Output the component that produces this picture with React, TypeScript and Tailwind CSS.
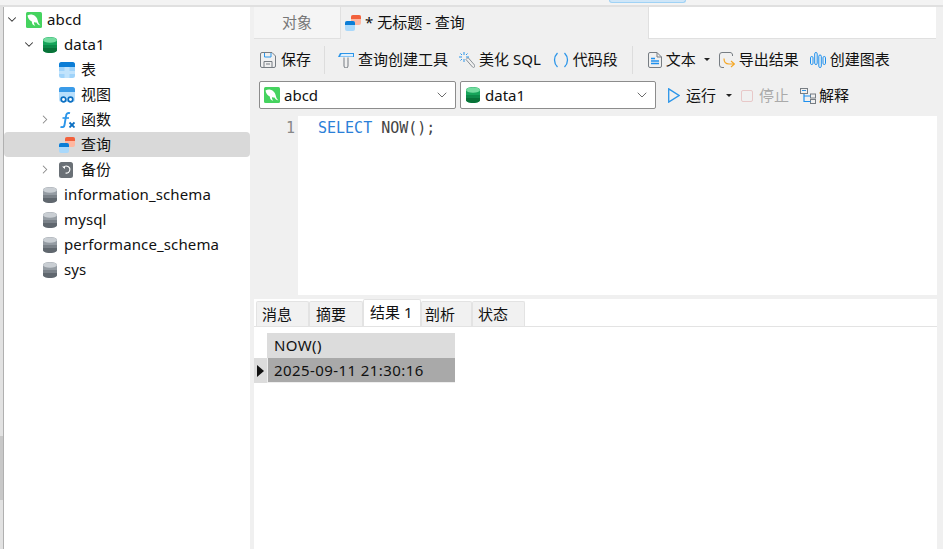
import type { ReactNode } from "react";
import { ChevronDown, ChevronRight } from "lucide-react";

const font = { fontFamily: '"Noto Sans", "Noto Sans CJK SC", sans-serif' };
const mono = { fontFamily: '"DejaVu Sans Mono", monospace' };

function Dolphin() {
  return (
    <svg width="16" height="16" viewBox="0 0 16 16" className="shrink-0">
      <rect width="16" height="16" rx="1.500" fill="#45d35f" />
      <path d="M1.500 3.500c2.500-1.500 5.500-1 7.500.5 2 1.500 2.500 3.500 3 5.500.3 1.300 1 2.500 2.500 4-2-.3-3.300-1.500-4-3-.8.300-1.800 0-2.500-.5-.2 1.500.3 2.500 1.200 3.800C7 13.500 6 12 5.800 9.500 3.500 8.500 2 6.500 1.500 3.500z" fill="#fff" />
    </svg>
  );
}

function Db({ color = "green" }: { color?: "green" | "gray" }) {
  const c = color === "green" ? ["#74dca0", "#16a55a", "#0d8a49", "#087238"] : ["#c9ced3", "#959ca3", "#7b8289", "#60676e"];
  return (
    <svg width="14" height="16" viewBox="0 0 14 16" className="shrink-0">
      <path d="M0 3c0-4 14-4 14 0v10c0 4-14 4-14 0z" fill={c[1]} />
      <path d="M0 8h14v3H0z" fill={c[2]} />
      <path d="M0 11h14v2c0 4-14 4-14 0z" fill={c[3]} />
      <ellipse cx="7" cy="3" rx="7" ry="2.800" fill={c[0]} />
    </svg>
  );
}

function TableIcon() {
  return (
    <svg width="16" height="16" viewBox="0 0 16 16">
      <rect width="16" height="16" rx="2.500" fill="#9fd3fa" />
      <path d="M0 2.500A2.500 2.500 0 0 1 2.500 0h11A2.500 2.500 0 0 1 16 2.500V5H0z" fill="#0b7dd6" />
      <path d="M5.500 5h5v11h-5zM0 9h16v3H0z" fill="#c9e7fd" opacity=".8" />
    </svg>
  );
}

function ViewIcon() {
  return (
    <svg width="16" height="16" viewBox="0 0 16 16">
      <rect width="16" height="15" rx="2.500" fill="#b8dffc" />
      <path d="M0 2.500A2.500 2.500 0 0 1 2.500 0h11A2.500 2.500 0 0 1 16 2.500V5H0z" fill="#3a9be8" />
      <circle cx="4.500" cy="12.500" r="2.300" fill="#fff" stroke="#0b6fc2" strokeWidth="1.700" />
      <circle cx="11.500" cy="12.500" r="2.300" fill="#fff" stroke="#0b6fc2" strokeWidth="1.700" />
    </svg>
  );
}

function FxIcon() {
  return (
    <svg width="16" height="16" viewBox="0 0 16 16" fill="none">
      <path d="M11 1.200C8.500.5 7.300 1.800 7 4L5.500 13c-.3 2-1.500 2.500-4 2" stroke="#2b95e9" strokeWidth="1.900" />
      <path d="M3.500 6h6.500" stroke="#2b95e9" strokeWidth="1.600" />
      <path d="M10.500 10.500l5 5M15.500 10.500l-5 5" stroke="#0b6fc2" strokeWidth="1.800" />
    </svg>
  );
}

function QueryIcon() {
  return (
    <svg width="16" height="16" viewBox="0 0 16 16" className="shrink-0">
      <rect x="6" y="0" width="10" height="10" rx="2" fill="#ffb7a0" />
      <path d="M6 2a2 2 0 0 1 2-2h6a2 2 0 0 1 2 2v2H6z" fill="#f2613c" />
      <rect x="0" y="6" width="10" height="10" rx="2" fill="#a9d8fb" />
      <path d="M0 8a2 2 0 0 1 2-2h6a2 2 0 0 1 2 2v2H0z" fill="#0b7dd6" />
    </svg>
  );
}

function BackupIcon() {
  return (
    <svg width="14" height="16" viewBox="0 0 14 16" fill="none">
      <rect width="14" height="16" rx="2.500" fill="#6a7076" />
      <path d="M4.500 5.500A3.500 3.500 0 1 1 6.500 11" stroke="#fff" strokeWidth="1.100" />
      <path d="M3 4.500h3v2.500z" fill="#fff" />
    </svg>
  );
}

function SaveIcon() {
  return (
    <svg width="16" height="16" viewBox="0 0 16 16" fill="none" className="shrink-0">
      <path d="M2 .5h10L15.500 4v10a1.500 1.500 0 0 1-1.500 1.500H2A1.500 1.500 0 0 1 .5 14V2A1.500 1.500 0 0 1 2 .5z" stroke="#777d83" />
      <path d="M4.500 1v4h6.500V1" stroke="#2b95e9" />
      <path d="M4 15V9.500h8V15M6 12h4" stroke="#777d83" />
    </svg>
  );
}

function HammerIcon() {
  return (
    <svg width="16" height="16" viewBox="0 0 16 16" fill="none" className="shrink-0">
      <path d="M0 5l2-4h14v4H0z" fill="#2b95e9" />
      <path d="M2 4.500L3.500 2H15v2.500H2z" fill="#dff0fd" />
      <path d="M6 5.500v8.500a2 2 0 0 0 4 0V5.500" stroke="#777d83" />
    </svg>
  );
}

function WandIcon() {
  return (
    <svg width="16" height="16" viewBox="0 0 16 16" fill="none" className="shrink-0">
      <path d="M7 7.500L9 5.500l6.500 7.500a1.400 1.400 0 0 1-2 2z" stroke="#8a9096" />
      <path d="M5 0v3M5 7v3M0 5h3M7 5h3M1.500 1.500l1.500 1.500M8.500 1.500L7 3M1.500 8.500L3 7" stroke="#2b95e9" />
    </svg>
  );
}

function ParenIcon() {
  return (
    <svg width="16" height="16" viewBox="0 0 16 16" fill="none" className="shrink-0">
      <path d="M4.500 1C.5 5 .5 11 4.500 15M11.500 1c4 4 4 10 0 14" stroke="#2b95e9" strokeWidth="1.300" />
    </svg>
  );
}

function DocIcon() {
  return (
    <svg width="14" height="16" viewBox="0 0 14 16" fill="none" className="shrink-0">
      <path d="M2 .5h7L13.500 5v9a1.500 1.500 0 0 1-1.500 1.500H2A1.500 1.500 0 0 1 .5 14V2A1.500 1.500 0 0 1 2 .5z" stroke="#777d83" />
      <path d="M9 .5V5h4.500" stroke="#777d83" />
      <path d="M3 6.500h4M3 9h8M3 11.500h8" stroke="#1e90ee" strokeWidth="1.300" />
    </svg>
  );
}

function ExportIcon() {
  return (
    <svg width="16" height="16" viewBox="0 0 16 16" fill="none" className="shrink-0">
      <path d="M11 .5H3A2.500 2.500 0 0 0 .5 3v10A2.500 2.500 0 0 0 3 15.500h2M11 .5c1.500 0 2.500 1 2.500 2.500v1" stroke="#777d83" />
      <path d="M5 6.500c0 4 2 5.500 5 5.500h5M12 9l3.500 3-3.500 3" stroke="#f5a623" strokeWidth="1.200" />
    </svg>
  );
}

function ChartIcon() {
  return (
    <svg width="16" height="16" viewBox="0 0 16 16" fill="none" className="shrink-0">
      <rect x=".5" y="4.500" width="2.500" height="8" rx="1.250" stroke="#1e90ee" />
      <rect x="4.700" y=".5" width="2.500" height="12" rx="1.250" stroke="#1e90ee" />
      <rect x="8.800" y="3" width="2.500" height="12.500" rx="1.250" stroke="#1e90ee" />
      <rect x="13" y="4.500" width="2.500" height="8" rx="1.250" stroke="#1e90ee" />
    </svg>
  );
}

function PlayIcon() {
  return (
    <svg width="12" height="15" viewBox="0 0 12 15" fill="none" className="shrink-0">
      <path d="M.7.9L11 7.500.7 14.100z" stroke="#2b95e9" strokeWidth="1.300" />
    </svg>
  );
}

function StopIcon() {
  return <span className="h-[12px] w-[12px] shrink-0 rounded-[2px] border border-[#e8c8c8]" />;
}

function ExplainIcon() {
  return (
    <svg width="16" height="16" viewBox="0 0 16 16" fill="none" className="shrink-0">
      <rect x=".5" y=".5" width="7" height="5" stroke="#777d83" />
      <path d="M2 2.500h4" stroke="#2b95e9" />
      <rect x="10.500" y="6" width="5" height="4" stroke="#777d83" />
      <rect x="10.500" y="11.500" width="5" height="4" stroke="#777d83" />
      <path d="M4 6v7.500h6.500M4 8h6.500" stroke="#1e90ee" strokeWidth="1.200" />
    </svg>
  );
}

function TreeRow({ indent, arrow, icon, label, selected, latin }: { indent: string; arrow?: "down" | "right"; icon: ReactNode; label: string; selected?: boolean; latin?: boolean }) {
  return (
    <div className={`flex h-[25px] items-center rounded-sm ${indent} ${selected ? "bg-[#d9d9d9]" : ""}`}>
      <div className="flex w-[14px] shrink-0 justify-center">
        {arrow === "down" && <ChevronDown size={17} strokeWidth={1.800} className="text-[#333]" />}
        {arrow === "right" && <ChevronRight size={17} strokeWidth={1.800} className="text-[#888]" />}
      </div>
      <div className="ml-[7px] flex w-[16px] shrink-0">{icon}</div>
      <span className={`text-[15px] text-[#111] ${latin ? "ml-[5px] tracking-[0.12px]" : "ml-[6px]"}`}>{label}</span>
    </div>
  );
}

function ToolBtn({ icon, label, disabled, caret, className }: { icon: ReactNode; label: string; disabled?: boolean; caret?: boolean; className?: string }) {
  return (
    <div className={`flex items-center text-[15px] ${disabled ? "text-[#aaa]" : "text-[#111]"} ${className ?? "gap-[4px]"}`}>
      {icon}
      <span>{label}</span>
      {caret && <span className="ml-[4px] h-0 w-0 border-x-[3px] border-t-[3px] border-x-transparent border-t-[#222]" />}
    </div>
  );
}

function Select({ icon, label, width }: { icon: ReactNode; label: string; width: string }) {
  return (
    <div className={`flex h-[28px] items-center rounded-[2px] border border-[#8c8c8c] bg-white pl-[4px] pr-[5px] ${width}`}>
      {icon}
      <span className="ml-[4px] flex-1 text-[15px] text-[#111]">{label}</span>
      <ChevronDown size={16} strokeWidth={1.300} className="text-[#555]" />
    </div>
  );
}

function Tab({ label, active, width }: { label: string; active?: boolean; width: string }) {
  return (
    <div className={`flex items-center rounded-t-[2px] border border-b-0 border-[#e3e3e3] text-[15px] text-[#111] ${width} ${active ? "h-[27px] bg-white pb-[1px]" : "h-[25px] bg-[#f1f1f1] pt-[1px]"}`}>
      {label}
    </div>
  );
}

export default function App() {
  return (
    <div className="flex h-[549px] w-[943px] flex-col overflow-hidden bg-[#f0f0f0]" style={font}>
      <div className="relative h-[7px] shrink-0 border-b-2 border-[#e0e0e0] bg-[#f3f3f3]">
        <div className="absolute left-[609px] top-0 h-[3px] w-[77px] rounded-b-sm border border-t-0 border-[#9fd2f5] bg-[#cfe6f8]" />
      </div>
      <div className="flex min-h-0 flex-1">
        <div className="flex w-[4px] shrink-0 flex-col border-r border-[#b0b0b0] bg-[#e2e2e2]">
          <div className="mt-[429px] h-[64px] bg-[#c8c8c8]" />
        </div>
        <div className="w-[246px] shrink-0 bg-white">
          <TreeRow indent="pl-[1px]" arrow="down" icon={<Dolphin />} label="abcd" latin />
          <TreeRow indent="pl-[18px]" arrow="down" icon={<Db />} label="data1" latin />
          <TreeRow indent="pl-[34px]" icon={<TableIcon />} label="表" />
          <TreeRow indent="pl-[34px]" icon={<ViewIcon />} label="视图" />
          <TreeRow indent="pl-[34px]" arrow="right" icon={<FxIcon />} label="函数" />
          <TreeRow indent="pl-[34px]" icon={<QueryIcon />} label="查询" selected />
          <TreeRow indent="pl-[34px]" arrow="right" icon={<BackupIcon />} label="备份" />
          <TreeRow indent="pl-[18px]" icon={<Db color="gray" />} label="information_schema" latin />
          <TreeRow indent="pl-[18px]" icon={<Db color="gray" />} label="mysql" latin />
          <TreeRow indent="pl-[18px]" icon={<Db color="gray" />} label="performance_schema" latin />
          <TreeRow indent="pl-[18px]" icon={<Db color="gray" />} label="sys" latin />
        </div>
        <div className="flex min-w-0 flex-1 flex-col pl-[4px]">
          <div className="flex h-[32px] shrink-0">
            <div className="flex w-[87px] items-center justify-center border-r border-b border-[#e0e0e0] bg-[#f5f5f5] text-[15px] text-[#777]">对象</div>
            <div className="flex w-[307px] items-center gap-[4px] pb-[1px] pl-[4px] text-[15px] text-[#111]">
              <QueryIcon />
              <span>* 无标题 - 查询</span>
            </div>
            <div className="w-[288px] border-b border-l border-[#e0e0e0] bg-white" />
          </div>
          <div className="flex h-[42px] shrink-0 items-center pb-[1px] pl-[6px]">
            <ToolBtn className="gap-[5px]" label="保存" icon={<SaveIcon />} />
            <div className="ml-[13px] mr-[13px] h-[28px] w-px bg-[#ddd]" />
            <ToolBtn label="查询创建工具" icon={<HammerIcon />} />
            <ToolBtn className="ml-[11px] gap-[4px]" label="美化 SQL" icon={<WandIcon />} />
            <ToolBtn className="ml-[12px] gap-[4px]" label="代码段" icon={<ParenIcon />} />
            <div className="ml-[14px] mr-[15px] h-[28px] w-px bg-[#ddd]" />
            <ToolBtn className="gap-[4px]" label="文本" caret icon={<DocIcon />} />
            <ToolBtn className="ml-[9px] gap-[4px]" label="导出结果" icon={<ExportIcon />} />
            <ToolBtn className="ml-[11px] gap-[4px]" label="创建图表" icon={<ChartIcon />} />
          </div>
          <div className="flex h-[28px] shrink-0 items-center pl-[5px]">
            <Select icon={<Dolphin />} label="abcd" width="w-[197px]" />
            <Select icon={<span className="mx-[1px] flex"><Db /></span>} label="data1" width="ml-[4px] w-[196px]" />
            <ToolBtn className="ml-[12px] gap-[6px] pt-[1px]" label="运行" caret icon={<PlayIcon />} />
            <ToolBtn className="ml-[9px] gap-[6px] pt-[1px]" label="停止" disabled icon={<StopIcon />} />
            <ToolBtn className="ml-[11px] gap-[3px] pt-[1px]" label="解释" icon={<ExplainIcon />} />
          </div>
          <div className="flex min-h-0 flex-1 flex-col pr-[6px]">
            <div className="mt-[7px] flex h-[179px] shrink-0 bg-white">
              <div className="w-[44px] bg-[#f0f0f0] pr-[3px] pt-[1px] text-right text-[15px] text-[#888]" style={mono}>1</div>
              <div className="pl-[20px] pt-[1px] text-[15px] text-[#444]" style={mono}>
                <span className="text-[#2b80d8]">SELECT</span> NOW();
              </div>
            </div>
            <div className="mt-[4px] flex min-h-0 flex-1 flex-col bg-white">
              <div className="flex h-[28px] shrink-0 items-end border-b border-[#e3e3e3] pl-[2px]">
                <Tab label="消息" width="w-[53px] pl-[5px]" />
                <Tab label="摘要" width="w-[54px] pl-[6px]" />
                <Tab label="结果 1" active width="w-[58px] pl-[6px]" />
                <Tab label="剖析" width="w-[51px] pl-[3px]" />
                <Tab label="状态" width="w-[53px] pl-[5px]" />
              </div>
              <div className="mt-[6px] grid w-[201px] grid-cols-[13px_188px] grid-rows-[25px_25px] text-[15px] text-[#111]">
                <div />
                <div className="flex items-center bg-[#dcdcdc] pl-[7px] tracking-[0.4px]">NOW()</div>
                <div className="flex items-center justify-center bg-[#dcdcdc]">
                  <span className="h-0 w-0 border-y-[6px] border-l-[7px] border-y-transparent border-l-[#111]" />
                </div>
                <div className="flex items-center border-b border-l border-[#eee] bg-[#a9a9a9] pl-[6px] tracking-[0.42px]">2025-09-11 21:30:16</div>
              </div>
            </div>
          </div>
        </div>
      </div>
    </div>
  );
}
